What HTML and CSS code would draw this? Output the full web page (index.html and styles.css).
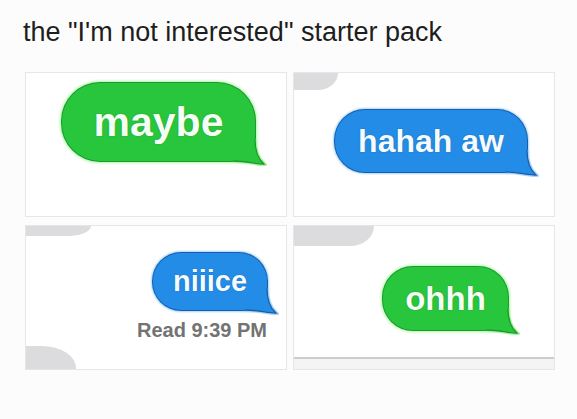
FILE: index.html
```html
<!DOCTYPE html>
<html lang="en">
  <head>
    <meta charset="UTF-8" />
    <meta name="viewport" content="width=device-width, initial-scale=1.0" />
    <title>the "I'm not interested" starter pack</title>
    <link rel="stylesheet" href="styles.css">
  </head>
  <body>
    <h1 class="title">the "I'm not interested" starter pack</h1>
    <div class="pack">
      <div class="panel panel-maybe">
        <div class="bubble green maybe">maybe</div>
      </div>
      <div class="panel panel-haha">
        <span class="cut cut-top-a"></span>
        <div class="bubble blue haha">hahah aw</div>
      </div>
      <div class="panel panel-nice">
        <span class="cut cut-top-b"></span>
        <div class="bubble blue nice">niiice</div>
        <div class="read">Read 9:39 PM</div>
        <span class="cut cut-bottom"></span>
      </div>
      <div class="panel panel-ohhh">
        <span class="cut cut-top-c"></span>
        <div class="bubble green ohhh">ohhh</div>
        <div class="input-bar"></div>
      </div>
    </div>
  </body>
</html>
```

FILE: styles.css
```css
body {
  margin: 0;
  background-color: #fcfcfc;
  font-family: "Liberation Sans", Arial, sans-serif;
}

.title {
  margin: 0;
  padding: 17px 0 0 23px;
  font-size: 27px;
  font-weight: normal;
  line-height: 31px;
  color: #1e1e1e;
}

.pack {
  display: grid;
  grid-template-columns: 262px 262px;
  grid-template-rows: 145px 145px;
  column-gap: 6px;
  row-gap: 8px;
  margin: 24px 0 0 25px;
}

.panel {
  position: relative;
  box-sizing: border-box;
  display: flex;
  overflow: hidden;
  background-color: #fff;
  border: 1px solid #e6e6e6;
}

.panel-maybe {
  padding: 10px 0 0 36px;
  align-items: flex-start;
}

.panel-haha {
  padding: 37px 0 0 41px;
  align-items: flex-start;
}

.panel-nice {
  flex-direction: column;
  align-items: flex-end;
  padding: 27px 19px 0 0;
}

.panel-ohhh {
  flex-direction: column;
  align-items: flex-start;
}

/* message bubbles */
.bubble {
  position: relative;
  display: flex;
  align-items: center;
  justify-content: center;
  border-radius: 30px;
  border-bottom-right-radius: 20px;
  font-weight: bold;
  color: #f4fff4;
}

.bubble::after {
  content: "";
  position: absolute;
  right: -12px;
  bottom: -6px;
  width: 34px;
  height: 28px;
}

.green {
  background-color: #27c63c;
  box-shadow: 0 0 0 1px #1b9a2e, 0 0 3px 2px #a9f5a2;
  text-shadow: 0 0 1px rgba(10, 90, 20, 0.7);
}

.green::after {
  background: url("data:image/svg+xml,%3Csvg xmlns='http://www.w3.org/2000/svg' width='34' height='28' viewBox='0 0 34 28'%3E%3Cpath d='M22 0C22 12 25 20 31 25C24 25.5 14 22 0 22' fill='none' stroke='%23a9f5a2' stroke-width='4'/%3E%3Cpath d='M0 0H22C22 12 25 20 31 25C24 25.5 14 22 0 22Z' fill='%2327c63c'/%3E%3Cpath d='M22 0C22 12 25 20 31 25C24 25.5 14 22 0 22' fill='none' stroke='%231b9a2e' stroke-width='1.3'/%3E%3C/svg%3E") no-repeat;
}

.blue {
  background-color: #238ce6;
  color: #f4fbff;
  box-shadow: 0 0 0 1px #175fae, 0 0 2px 2px #a9d3f5;
  text-shadow: 0 0 1px rgba(10, 50, 110, 0.7);
}

.blue::after {
  background: url("data:image/svg+xml,%3Csvg xmlns='http://www.w3.org/2000/svg' width='34' height='28' viewBox='0 0 34 28'%3E%3Cpath d='M22 0C22 12 25 20 31 25C24 25.5 14 22 0 22' fill='none' stroke='%23a9d3f5' stroke-width='4'/%3E%3Cpath d='M0 0H22C22 12 25 20 31 25C24 25.5 14 22 0 22Z' fill='%23238ce6'/%3E%3Cpath d='M22 0C22 12 25 20 31 25C24 25.5 14 22 0 22' fill='none' stroke='%23175fae' stroke-width='1.3'/%3E%3C/svg%3E") no-repeat;
}

.maybe {
  width: 193px;
  height: 78px;
  border-radius: 38px;
  border-bottom-right-radius: 20px;
  font-size: 41px;
}

.haha {
  width: 192px;
  height: 62px;
  font-size: 32px;
}

.nice {
  width: 114px;
  height: 57px;
  border-radius: 28px;
  border-bottom-right-radius: 20px;
  font-size: 29px;
}

.ohhh {
  width: 125px;
  height: 63px;
  margin: 41px 0 0 89px;
  font-size: 33px;
}

.read {
  margin-top: 9px;
  font-size: 20px;
  font-weight: bold;
  line-height: 23px;
  color: #737373;
}

/* cut-off grey bubbles at the panel edges */
.cut {
  position: absolute;
  left: 0;
  background-color: #dcdcde;
}

.cut-top-a {
  top: 0;
  width: 44px;
  height: 17px;
  border-bottom-right-radius: 20px 17px;
}

.cut-top-b {
  top: 0;
  width: 65px;
  height: 10px;
  border-bottom-right-radius: 23px 10px;
}

.cut-top-c {
  top: 0;
  width: 80px;
  height: 20px;
  border-bottom-right-radius: 24px 20px;
}

.cut-bottom {
  bottom: 0;
  width: 50px;
  height: 23px;
  border-top-right-radius: 34px 22px;
}

.input-bar {
  align-self: stretch;
  margin-top: auto;
  height: 10px;
  border-top: 2px solid #cdcdcd;
  background-color: #f4f4f4;
}
```
